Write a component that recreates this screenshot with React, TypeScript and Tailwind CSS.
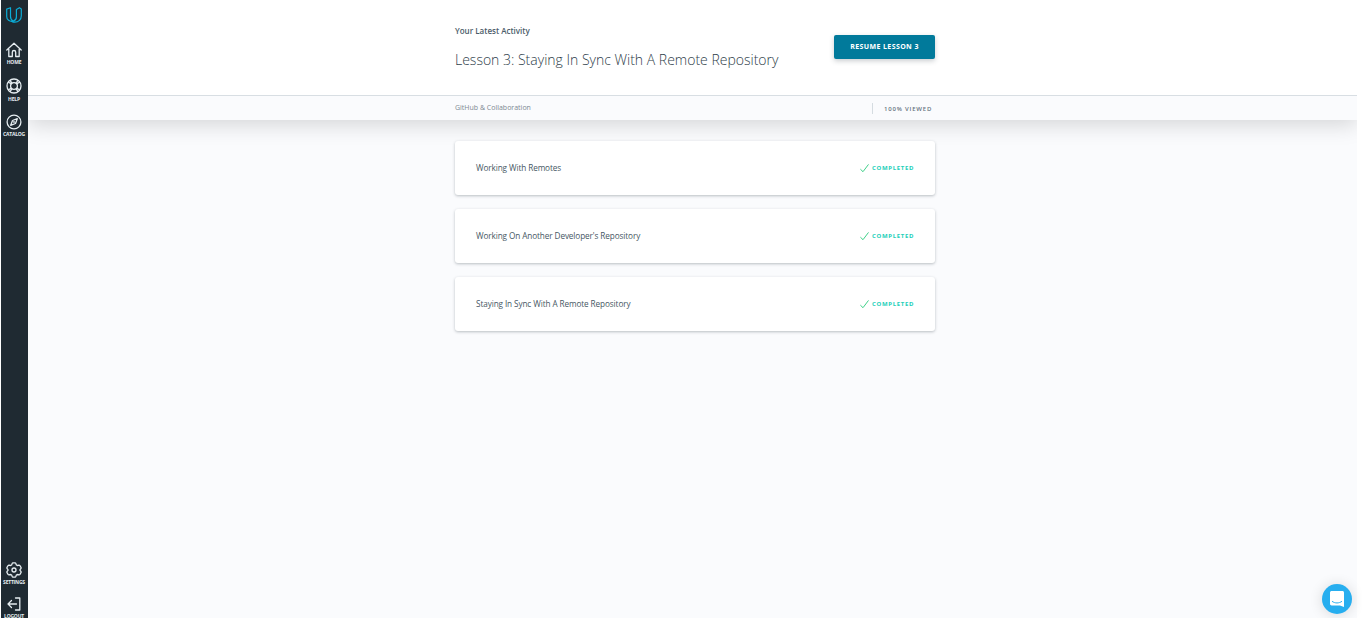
import React from "react";

type IconProps = { children: React.ReactNode };

function NavIcon({ children }: IconProps) {
  return (
    <svg
      className="block h-4 w-4"
      viewBox="0 0 16 16"
      fill="none"
      stroke="currentColor"
      strokeWidth="1.3"
      strokeLinecap="round"
      strokeLinejoin="round"
    >
      {children}
    </svg>
  );
}

type NavItemProps = { label: string; children: React.ReactNode; className: string; labelClassName?: string };

function NavItem({ label, children, className, labelClassName = "mt-px" }: NavItemProps) {
  return (
    <a className={`flex flex-col items-center text-[#e6edf1] ${className}`}>
      <NavIcon>{children}</NavIcon>
      <span className={`text-[5px] leading-[7px] font-bold tracking-[-0.2px] whitespace-nowrap ${labelClassName}`}>{label}</span>
    </a>
  );
}

function Sidebar() {
  return (
    <nav className="flex h-full w-[27px] shrink-0 flex-col items-center overflow-hidden bg-[#1f2a32] pr-px">
      <svg className="mt-[7px] block h-4 w-4 shrink-0" viewBox="0 0 16 16" fill="none" stroke="#0bacd6" strokeWidth="1.2" strokeLinejoin="round">
        <path d="M.7 2.100 4.500.7V9.500c0 2.300.9 3.700 2.700 4.600C3.500 14.900.7 12.800.7 9.400Z" />
        <path d="M7.200 14.100c2.100-.7 3.200-2.200 3.200-4.200V2.500L13.500.7l1.800 1.200v6.900c0 3.700-2.700 6.400-6.500 6.400-1.200 0-2.200-.3-3-.8" />
      </svg>
      <NavItem label="HOME" className="mt-[19px] shrink-0">
        <path d="M.8 8 8 1.300 15.200 8M2.800 7v7.500h3.500v-4.300a1.700 1.700 0 0 1 3.400 0v4.300h3.500V7" />
      </NavItem>
      <NavItem label="HELP" className="mt-[12px] shrink-0" labelClassName="mt-[2px]">
        <circle cx="8" cy="8" r="7" />
        <circle cx="8" cy="8" r="3.400" />
        <path d="m2.600 4.300 2.700 1.600M4.300 2.600l1.600 2.700M13.400 4.300l-2.700 1.600M11.700 2.600l-1.600 2.700M2.600 11.700l2.700-1.600M4.300 13.400l1.600-2.700M13.400 11.700l-2.700-1.600M11.700 13.400l-1.600-2.700" />
      </NavItem>
      <NavItem label="CATALOG" className="mt-[11px] shrink-0">
        <circle cx="8" cy="8" r="6.900" />
        <path d="m11.300 4.700-1.800 4.800-4.800 1.800 1.800-4.800Z" />
        <circle cx="8" cy="8" r=".3" />
      </NavItem>
      <NavItem label="SETTINGS" className="mt-auto shrink-0">
        <path d="m6.200 1.400.5-.6h2.600l.5.600.5 1.500 1.100.6 1.700-.3.800.3 1.200 2.100-.1.900L14 7.600v.8l1 1.100.1.900-1.200 2.100-.8.300-1.700-.3-1.100.6-.5 1.500-.5.600H6.700l-.5-.6-.5-1.500-1.100-.6-1.700.3-.8-.3-1.200-2.100.1-.9 1-1.100v-.8L1 6.500l-.1-.9 1.200-2.100.8-.3 1.700.3 1.100-.6Z" />
        <circle cx="8" cy="8" r="2" />
      </NavItem>
      <NavItem label="LOGOUT" className="-mb-[2px] mt-[10px] shrink-0">
        <path d="M9.500 2h4.300v12H9.500M10.500 8h-8.500M5.500 4.500 2 8 5.500 11.500" />
      </NavItem>
    </nav>
  );
}

const lessons = ["Working With Remotes", "Working On Another Developer's Repository", "Staying In Sync With A Remote Repository"];

function LessonCard({ title }: { title: string }) {
  return (
    <article className="flex h-[54px] items-center justify-between rounded-[3px] bg-white px-[21px] shadow-[0_1px_3px_rgba(46,61,73,0.32)]">
      <h2 className="text-[8.2px] leading-3 tracking-[-0.1px] text-[#465764]">{title}</h2>
      <div className="flex items-center gap-[3px] text-[#1ccfb9]">
        <svg className="block h-[9px] w-[9px]" viewBox="0 0 9 9" fill="none" stroke="#36cd83" strokeWidth=".95">
          <path d="M.4 5.200 3 7.700 8.500.4" />
        </svg>
        <span className="text-[6px] leading-[9px] font-bold tracking-[0.65px]">COMPLETED</span>
      </div>
    </article>
  );
}

export default function App() {
  return (
    <div className="relative flex h-[618px] w-[1362px] overflow-hidden bg-white pr-[5px] pl-px font-['Open_Sans',sans-serif]">
      <Sidebar />
      <main className="min-w-0 flex-1 overflow-hidden bg-[#fafbfd]">
        <header className="shadow-[0_5px_20px_rgba(0,0,0,0.15)]">
          <div className="h-[96px] border-b border-[#d8dee3] bg-white">
            <div className="ml-[427px] flex w-[480px] justify-between">
              <div>
                <p className="mt-[25px] text-[8px] leading-3 font-semibold text-[#4b5c69]">Your Latest Activity</p>
                <h1 className="mt-[13px] text-[14px] leading-5 font-light whitespace-nowrap text-[#2e3d49]">
                  Lesson 3: Staying In Sync With A Remote Repository
                </h1>
              </div>
              <button className="mt-[35px] h-6 w-[101px] rounded-[2px] bg-[#017a9b] text-[7px] font-bold tracking-[0.4px] text-white shadow-[0_2px_5px_rgba(46,61,73,0.25)]">
                RESUME LESSON 3
              </button>
            </div>
          </div>
          <div className="h-[24px] bg-[#fafbfd]">
            <div className="ml-[427px] flex h-6 w-[480px] justify-between">
              <p className="mt-[6px] text-[7px] leading-3 text-[#7d8993]">GitHub &amp; Collaboration</p>
              <div className="mt-[7px] flex h-[11px] w-[63px] items-center border-l border-[#d5dce1] pt-[2px] pl-[11px] text-[6px] font-semibold tracking-[0.8px] whitespace-nowrap text-[#66747f]">
                100% VIEWED
              </div>
            </div>
          </div>
        </header>
        <section className="mt-[21px] ml-[427px] flex w-[480px] flex-col gap-[14px]">
          {lessons.map((title) => (
            <LessonCard key={title} title={title} />
          ))}
        </section>
      </main>
      <button className="absolute top-[584px] left-[1322px] flex h-[30px] w-[30px] items-center justify-center rounded-full bg-[#27aeef] shadow-[0_1px_14px_rgba(0,0,0,0.14)]">
        <svg className="block h-4 w-[14px]" viewBox="0 0 14 16">
          <path fill="#fff" d="M1.700 0h10.600C13.400 0 14 .7 14 1.700V16l-4-1.600H1.700C.7 14.400 0 13.700 0 12.700v-11C0 .7.700 0 1.700 0Z" />
          <path d="M2.300 10.500c2.800 2 6.600 2 9.400 0" fill="none" stroke="#27aeef" strokeLinecap="round" />
        </svg>
      </button>
    </div>
  );
}
